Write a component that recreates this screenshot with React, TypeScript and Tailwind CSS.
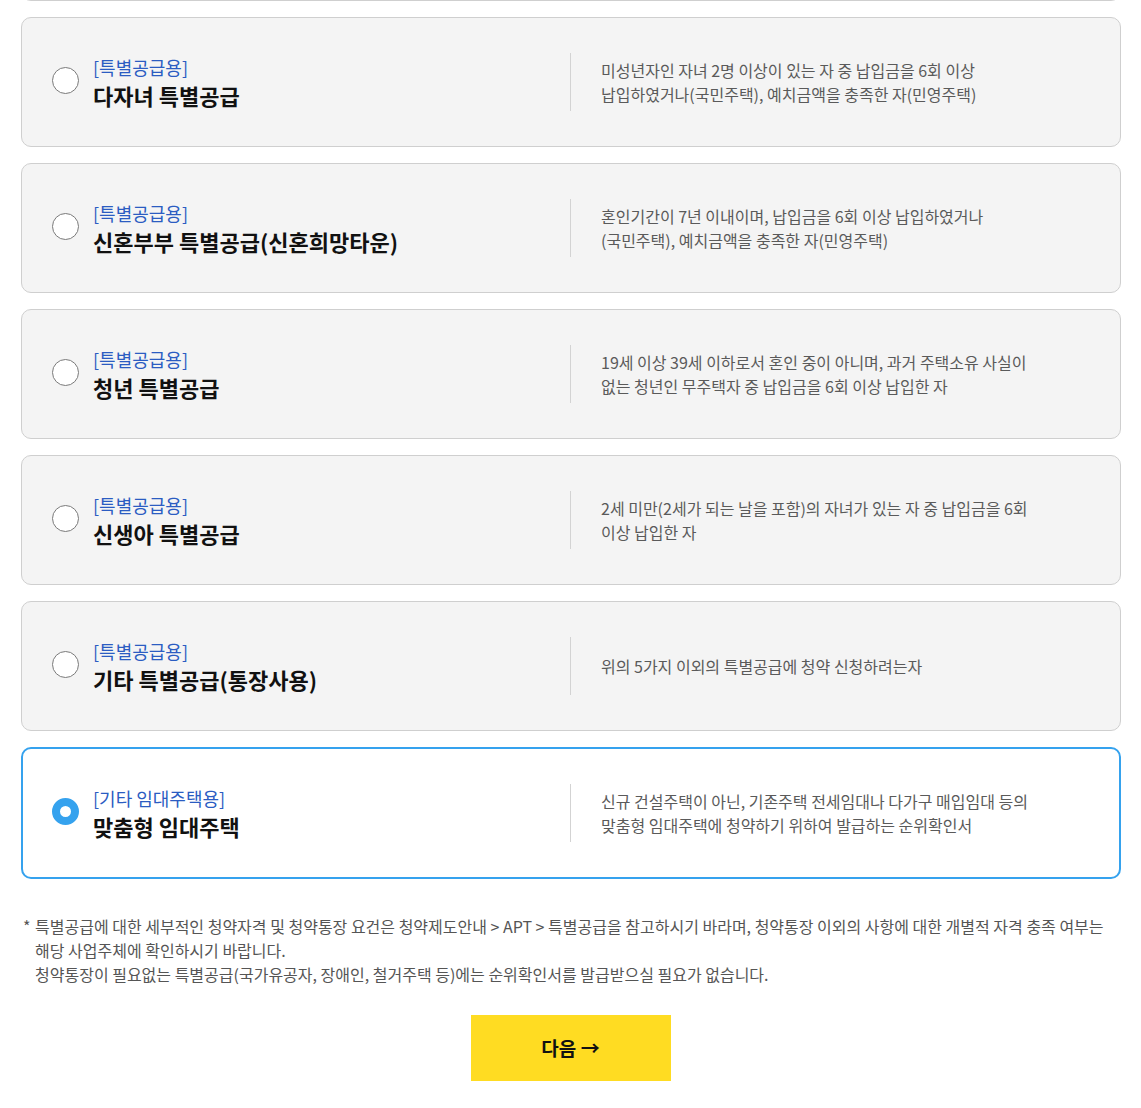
import React from "react";

type Item = { tag: string; title: string; desc: string[]; selected?: boolean };

const items: Item[] = [
  {
    tag: "[특별공급용]",
    title: "다자녀 특별공급",
    desc: [
      "미성년자인 자녀 2명 이상이 있는 자 중 납입금을 6회 이상",
      "납입하였거나(국민주택), 예치금액을 충족한 자(민영주택)",
    ],
  },
  {
    tag: "[특별공급용]",
    title: "신혼부부 특별공급(신혼희망타운)",
    desc: [
      "혼인기간이 7년 이내이며, 납입금을 6회 이상 납입하였거나",
      "(국민주택), 예치금액을 충족한 자(민영주택)",
    ],
  },
  {
    tag: "[특별공급용]",
    title: "청년 특별공급",
    desc: [
      "19세 이상 39세 이하로서 혼인 중이 아니며, 과거 주택소유 사실이",
      "없는 청년인 무주택자 중 납입금을 6회 이상 납입한 자",
    ],
  },
  {
    tag: "[특별공급용]",
    title: "신생아 특별공급",
    desc: [
      "2세 미만(2세가 되는 날을 포함)의 자녀가 있는 자 중 납입금을 6회",
      "이상 납입한 자",
    ],
  },
  {
    tag: "[특별공급용]",
    title: "기타 특별공급(통장사용)",
    desc: ["위의 5가지 이외의 특별공급에 청약 신청하려는자"],
  },
  {
    tag: "[기타 임대주택용]",
    title: "맞춤형 임대주택",
    desc: [
      "신규 건설주택이 아닌, 기존주택 전세임대나 다가구 매입임대 등의",
      "맞춤형 임대주택에 청약하기 위하여 발급하는 순위확인서",
    ],
    selected: true,
  },
];

function Card({ item }: { item: Item }) {
  const sel = item.selected;
  return (
    <div
      className={
        sel
          ? "flex h-[132px] items-center rounded-[10px] border-2 border-[#35a2ee] bg-white pl-[29px] pr-[29px]"
          : "flex h-[130px] items-center rounded-[10px] border border-[#cfcfcf] bg-[#f4f4f4] pl-[30px] pr-[30px]"
      }
    >
      <div className="flex w-[518px] items-center gap-[14px]">
        {sel ? (
          <div className="-mt-[3px] h-[27px] w-[27px] shrink-0 rounded-full border-[8px] border-[#35a2ee] bg-white" />
        ) : (
          <div className="-mt-[3px] h-[27px] w-[27px] shrink-0 rounded-full border border-[#7a7a7a] bg-white" />
        )}
        <div className="-mt-[1px] flex flex-col">
          <div className="text-[18px] leading-[26px] text-[#2b5cc2]">{item.tag}</div>
          <div className="text-[22px] font-bold leading-[30px] text-[#111]">{item.title}</div>
        </div>
      </div>
      <div className="h-[58px] border-l border-[#d3d3d3]" />
      <div className="-mt-[1px] pl-[30px] text-[16px] leading-[24px] text-[#5a5a5a]">
        {item.desc.map((d, i) => (
          <div key={i}>{d}</div>
        ))}
      </div>
    </div>
  );
}

export default function App() {
  return (
    <div
      className="min-h-[1108px] overflow-hidden bg-white"
      style={{ fontFamily: '"Noto Sans CJK KR", "Noto Sans", sans-serif' }}
    >
      <div className="flex flex-col gap-[16px] pl-[21px] pr-[20px]">
        <div className="-mt-[129px] h-[130px] rounded-[10px] border border-[#cfcfcf] bg-[#f4f4f4]" />
        {items.map((it, i) => (
          <Card key={i} item={it} />
        ))}
      </div>
      <div className="mt-[35px] flex px-[23px] text-[16px] leading-[24px] text-[#555]">
        <div className="w-[12px] shrink-0">*</div>
        <div>
          <div>
            특별공급에 대한 세부적인 청약자격 및 청약통장 요건은 청약제도안내 &gt; APT &gt; 특별공급을 참고하시기 바라며, 청약통장 이외의 사항에 대한 개별적 자격 충족 여부는
          </div>
          <div>해당 사업주체에 확인하시기 바랍니다.</div>
          <div>청약통장이 필요없는 특별공급(국가유공자, 장애인, 철거주택 등)에는 순위확인서를 발급받으실 필요가 없습니다.</div>
        </div>
      </div>
      <div className="mt-[29px] flex justify-center">
        <button className="flex h-[66px] w-[200px] items-center justify-center bg-[#ffdc22] text-[19px] font-bold text-[#111]">
          다음 →
        </button>
      </div>
    </div>
  );
}
